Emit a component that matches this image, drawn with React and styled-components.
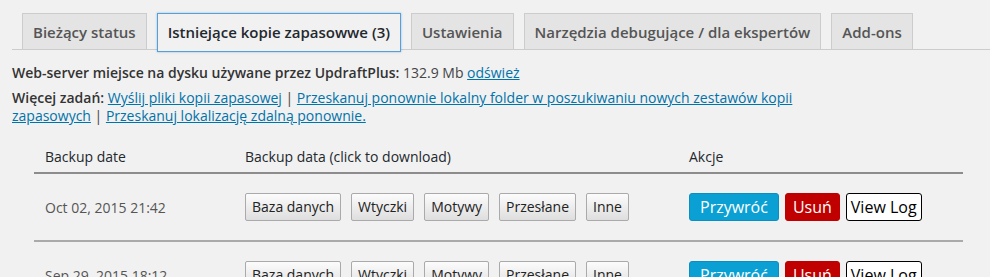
import styled, { createGlobalStyle } from "styled-components";

const GlobalStyle = createGlobalStyle`
  body {
    margin: 0;
    background: #f1f1f1;
    font-family: "Open Sans", "Noto Sans", sans-serif;
    color: #444;
    font-size: 14px;
  }
`;

const Page = styled.div`
  padding: 13px 0 0 12px;
`;

const TabBar = styled.nav`
  display: flex;
  gap: 10px;
  padding-left: 10px;
  border-bottom: 1px solid #ccc;
  height: 36px;
`;

const Tab = styled.div`
  box-sizing: border-box;
  height: ${(p) => (p.active ? "39px" : "37px")};
  padding: 6px 10px;
  font-size: 15px;
  font-weight: 600;
  line-height: 24px;
  color: ${(p) => (p.active ? "#23282d" : "#555")};
  background: ${(p) => (p.active ? "#f1f1f1" : "#e4e4e4")};
  border: 1px solid ${(p) => (p.active ? "#5b9dd9" : "#ccc")};
  white-space: nowrap;
  ${(p) => p.active && "box-shadow: 0 0 2px rgba(30,140,190,.5);"}
`;

const Para = styled.p`
  margin: ${(p) => p.$top || "0"} 0 0;
  line-height: 18px;
  max-width: ${(p) => p.$max || "none"};
`;

const Strong = styled.span`
  font-weight: 600;
  color: #333;
`;

const Link = styled.a`
  color: #0073aa;
  text-decoration: underline;
`;

const Table = styled.div`
  margin: 15px 0 0 22px;
  width: 929px;
`;

const Row = styled.div`
  display: grid;
  grid-template-columns: 200px 444px 1fr;
  align-items: center;
  border-bottom: 2px solid ${(p) => (p.head ? "#8c8c8c" : "#aaa")};
  height: ${(p) => (p.head ? "32px" : "66px")};
`;

const Cell = styled.div`
  padding: 0 11px;
  font-size: 14px;
  color: ${(p) => (p.head ? "#23282d" : "#555")};
  display: flex;
  gap: ${(p) => p.$gap || "0"};
  align-items: center;
  white-space: nowrap;
`;

const DataButton = styled.button`
  font-family: inherit;
  font-size: 14px;
  color: #222;
  height: 28px;
  padding: 0 6px;
  border: 1px solid #aaa;
  border-radius: 2px;
  background: linear-gradient(#fcfcfc, #dedede);
  line-height: 26px;
`;

const ActionButton = styled.button`
  font-family: inherit;
  font-size: 16px;
  height: 28px;
  line-height: 26px;
  padding: 0 ${(p) => p.$pad || "10px"};
  border-radius: 3px;
  color: ${(p) => p.$fg};
  background: ${(p) => p.$bg};
  border: 1px solid ${(p) => p.$border};
`;

const tabs = [
  "Bieżący status",
  "Istniejące kopie zapasowwe (3)",
  "Ustawienia",
  "Narzędzia debugujące / dla ekspertów",
  "Add-ons",
];

const backups = ["Oct 02, 2015 21:42", "Sep 29, 2015 18:12"];
const parts = ["Baza danych", "Wtyczki", "Motywy", "Przesłane", "Inne"];

export default function App() {
  return (
    <Page>
      <GlobalStyle />
      <TabBar>
        {tabs.map((t, i) => (
          <Tab key={t} active={i === 1}>
            {t}
          </Tab>
        ))}
      </TabBar>
      <Para $top="14px">
        <Strong>Web-server miejsce na dysku używane przez UpdraftPlus:</Strong> 132.9 Mb{" "}
        <Link>odśwież</Link>
      </Para>
      <Para $top="7px" $max="810px">
        <Strong>Więcej zadań:</Strong> <Link>Wyślij pliki kopii zapasowej</Link> |{" "}
        <Link>Przeskanuj ponownie lokalny folder w poszukiwaniu nowych zestawów kopii zapasowych</Link> |{" "}
        <Link>Przeskanuj lokalizację zdalną ponownie.</Link>
      </Para>
      <Table>
        <Row head>
          <Cell head>Backup date</Cell>
          <Cell head>Backup data (click to download)</Cell>
          <Cell head>Akcje</Cell>
        </Row>
        {backups.map((d) => (
          <Row key={d}>
            <Cell>{d}</Cell>
            <Cell $gap="10px">
              {parts.map((p) => (
                <DataButton key={p}>{p}</DataButton>
              ))}
            </Cell>
            <Cell $gap="6px">
              <ActionButton $bg="#0aa0d4" $fg="#fff" $border="#0a8fc0">Przywróć</ActionButton>
              <ActionButton $bg="#c00000" $fg="#fff" $border="#c00000" $pad="7px">Usuń</ActionButton>
              <ActionButton $bg="#fff" $fg="#000" $border="#000" $pad="4px">View Log</ActionButton>
            </Cell>
          </Row>
        ))}
      </Table>
    </Page>
  );
}
